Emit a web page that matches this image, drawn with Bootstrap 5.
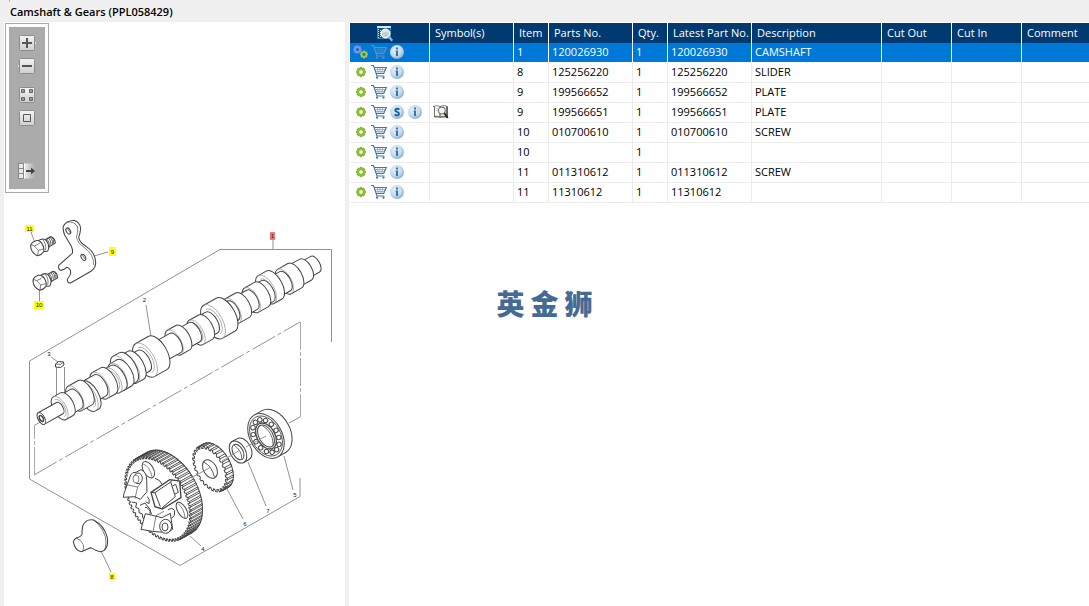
<!DOCTYPE html>
<html lang="en">
<head>
<meta charset="utf-8">
<meta name="viewport" content="width=device-width, initial-scale=1">
<title>Camshaft &amp; Gears (PPL058429)</title>
<link href="https://cdn.jsdelivr.net/npm/bootstrap@5.3.0/dist/css/bootstrap.min.css" rel="stylesheet">
<style>
body{background:#f0f0f0;color:#000;font-family:"Open Sans","Noto Sans",sans-serif;font-size:11px;line-height:16px}
.title-bar{height:22px;padding:4px 10px 0}
.title-bar h1{font-size:11px;line-height:16px;font-weight:600;margin:0}
.title-bar::before{content:"";position:absolute;left:9px;top:0;width:1px;height:2px;background:#b4b4b4}
.workspace{display:grid;grid-template-columns:341px minmax(0,1fr);gap:4px;padding-left:4px;flex:1}
.tool-frame{border:1px solid #aaa;background:#fff;padding:3px;width:44px;margin:1px 0 0 1px}
.tool-strip{background:#ababab;padding:8px 0 10px}
.tool-btn,.icon-btn{border:0;background:none;padding:0;display:block;width:16px;height:16px;line-height:0}
.tool-btn{overflow:visible}
.tool-btn svg,.icon-btn svg,.cell-icon{width:16px;height:16px;display:block;overflow:visible}
.tools-zoom,.tools-fit{gap:7px}
.tools-fit{margin-top:13px}
.tools-panel{margin-top:37px}
.drawing{display:block;width:100%}
.drawing text{font:6px "Liberation Sans",Arial,sans-serif;fill:#111;text-anchor:middle}
.parts-pane{padding:1px 0 0 1px;overflow:auto}
.parts-table{table-layout:fixed;width:100%;min-width:700px;margin:0;color:#000;border-collapse:separate;border-spacing:0}
.parts-table th,.parts-table td{height:20px;padding:0 3px 2px;border:0;white-space:nowrap;font-weight:400;line-height:17px;vertical-align:middle;box-shadow:none}
.parts-table th{background:#003a70;color:#fff;border-right:1px solid #fff;padding:0 0 2px 5px}
.parts-table th.icon-head{padding:2px 0 0 27px}
.parts-table td{background:#fff;color:#000;border-right:1px solid #ececec;border-bottom:1px solid #ececec}
.parts-table tr>:last-child{border-right:0}
.parts-table .selected td{background:#0078d7;color:#fff;border-color:#fff}
.icon-row{gap:2px}
.brand-mark{position:absolute;left:50%;top:50%;transform:translate(-50%,-50%);gap:6px;font:900 28px/28px "Noto Sans CJK SC",sans-serif;color:#446b96;pointer-events:none}
</style>
</head>
<body>
<svg width="0" height="0" class="position-absolute" aria-hidden="true">
<defs>
<linearGradient id="gBtn" x1="0" y1="0" x2="0" y2="1"><stop offset="0" stop-color="#f4f4f4"/><stop offset="1" stop-color="#cfcfcf"/></linearGradient>
<radialGradient id="gDisc" cx=".4" cy=".35" r=".7"><stop offset="0" stop-color="#e6f0f9"/><stop offset=".6" stop-color="#c5daec"/><stop offset="1" stop-color="#7fa8cd"/></radialGradient>
<linearGradient id="gFade"><stop offset="0" stop-color="#eee"/><stop offset="1" stop-color="#ababab"/></linearGradient>
<symbol id="cog" viewBox="0 0 16 16"><g stroke="#80b42a" stroke-width="2.6"><path d="M8 3v10M3 8h10M4.500 4.500l7 7M11.500 4.500l-7 7"/></g><circle cx="8" cy="8" r="4" fill="#8cbf35"/><circle cx="8" cy="8" r="1.8" fill="#fff"/></symbol>
<symbol id="cogs" viewBox="0 0 16 16"><g stroke="#5d86e0" stroke-width="2"><path d="M4.500 1v9M0 5.500h9M1.300 2.300l6.400 6.400M7.700 2.300l-6.400 6.400"/></g><circle cx="4.500" cy="5.500" r="3.400" fill="#7897e5"/><circle cx="4.500" cy="5.500" r="1.500" fill="#1b5fc0"/><g stroke="#93bf3f" stroke-width="2"><path d="M11 6.500v8M7 10.500h8M8.200 7.700l5.600 5.600M13.800 7.700l-5.600 5.600"/></g><circle cx="11" cy="10.500" r="3" fill="#a3c951"/><circle cx="11" cy="10.500" r="1.400" fill="#1c70b8"/></symbol>
<symbol id="cart" viewBox="0 0 16 16"><path d="M0 1.500h2.500l3.500 10.500h7.500M3.500 3.500h11.800l-2.600 6H5.500" fill="none" stroke="currentColor" stroke-width="1.200"/><path d="M4 5.500h10.500M4.500 7.500h9M6.500 3.500l.8 6M9 3.500v6M11.800 3.500l-1 6" stroke="currentColor" stroke-width=".8" opacity=".65"/><circle cx="6" cy="13.700" r="1.100" fill="currentColor"/><circle cx="12.500" cy="13.700" r="1.100" fill="currentColor"/></symbol>
<symbol id="info" viewBox="0 0 16 16"><circle cx="8" cy="8" r="7" fill="url(#gDisc)"/><path d="M7 3.500h2v2H7zM6.500 6.500H9V12H7V7.500h-.5z" fill="#3573ab"/></symbol>
<symbol id="super" viewBox="0 0 16 16"><circle cx="8" cy="8" r="7" fill="url(#gDisc)"/><path d="M10.300 5.500C9.200 4.400 6.200 4.200 6.200 6.200 6.200 8.200 10 7.600 10 9.800c0 2.200-3 1.900-4.400.8" fill="none" stroke="#0b66a5" stroke-width="1.900"/></symbol>
<symbol id="book" viewBox="0 0 16 16"><path d="M0 2.500h1.500v10.500h5l1 1 1-1h6V2.500h-1" fill="#8b8570" stroke="#6b6757"/><path d="M1.500 2c2-.8 4-.3 5.500.8v10.400c-1.500-1-3.500-1.300-5.500-.8zM7 2.800C8.500 1.700 11 1.300 13.500 2v10.400c-2-.4-5-.2-6.500.8z" fill="#fbfbf7" stroke="#55524a" stroke-width=".7"/><path d="M3 4.500h2M3 6.500h2" stroke="#ccc"/><circle cx="8.800" cy="6.500" r="3.400" fill="#f3f6f8" stroke="#777" stroke-width="1.100"/><path d="M11.300 9l3.400 5" stroke="#222" stroke-width="1.800"/></symbol>
<symbol id="finder" viewBox="0 0 16 16"><path d="M.5.500h13v12H.5z" fill="#0a4f84" stroke="#2b86bd"/><path d="M0 1h14" stroke="#cfe8f5" stroke-width="2"/><path d="M1.500 3v10M3.500 4v8" stroke="#d9edf7" stroke-dasharray="1 1"/><circle cx="8.500" cy="7.500" r="4.300" fill="#c4cdd2" stroke="#f4f7f8" stroke-width="1.400"/><path d="M6 6.500c1-2 4-2 5 0" fill="none" stroke="#fff"/><path d="M12 11l3.300 3.700" stroke="#7ec1e4" stroke-width="2.200"/></symbol>
</defs>
</svg>

<div class="d-flex flex-column min-vh-100 position-relative">
<header class="title-bar"><h1>Camshaft &amp; Gears (PPL058429)</h1></header>
<main class="workspace">
<section class="bg-white" aria-label="Drawing">
  <div class="tool-frame"><div class="tool-strip d-flex flex-column align-items-center" role="toolbar" aria-label="View tools">
    <div class="tools-zoom d-flex flex-column">
      <button class="tool-btn" type="button" aria-label="Zoom in"><svg viewBox="0 0 16 16"><path d="M15 5l3 3-3 3z" fill="#e4e4e4" stroke="#999" stroke-width=".6"/><rect x=".5" y=".5" width="15" height="15" rx="1" fill="url(#gBtn)" stroke="#8c8c8c"/><path d="M3 8h10M8 3v10" stroke="#555" stroke-width="2"/></svg></button>
      <button class="tool-btn" type="button" aria-label="Zoom out"><svg viewBox="0 0 16 16"><path d="M1 5L-2 8l3 3z" fill="#e4e4e4" stroke="#999" stroke-width=".6"/><rect x=".5" y=".5" width="15" height="15" rx="1" fill="url(#gBtn)" stroke="#8c8c8c"/><path d="M3 8h10" stroke="#555" stroke-width="2"/></svg></button>
    </div>
    <div class="tools-fit d-flex flex-column">
      <button class="tool-btn" type="button" aria-label="Fit to window"><svg viewBox="0 0 16 16"><rect x=".5" y=".5" width="15" height="15" rx="1" fill="url(#gBtn)" stroke="#8c8c8c"/><path d="M2.500 2.500h3v3h-3zM10.500 2.500h3v3h-3zM2.500 10.500h3v3h-3zM10.500 10.500h3v3h-3z" fill="#999" stroke="#666"/></svg></button>
      <button class="tool-btn" type="button" aria-label="Actual size"><svg viewBox="0 0 16 16"><rect x=".5" y=".5" width="15" height="15" rx="1" fill="url(#gBtn)" stroke="#8c8c8c"/><path d="M4.500 4.500h7v7h-7z" fill="none" stroke="#555"/></svg></button>
    </div>
    <div class="tools-panel">
      <button class="tool-btn" type="button" aria-label="Move panel"><svg viewBox="0 0 16 16"><path d="M5 .5h11v15H5z" fill="url(#gFade)"/><path d="M-.5.500h5v15h-5z" fill="#e8e8e8" stroke="#888"/><path d="M-.5 5.500h5M-.5 10.500h5" stroke="#888"/><path d="M5.500.5v15" stroke="#fff"/><path d="M7 8h6" stroke="#444" stroke-width="2"/><path d="M12 4.500L16 8l-4 3.500z" fill="#444"/></svg></button>
    </div>
  </div></div>

  <svg class="drawing" viewBox="4 193 341 413" fill="none" stroke="#444" role="img" aria-label="Exploded view of camshaft and gears">
    <g stroke="#929292">
      <path d="M29.500 361L220 249.500h111.500V342M29.500 361v118L180 565.500l120-69V478M34 425.500l9-5"/>
      <path d="M34 475L300 322" stroke-dasharray="26 3 4 3"/>
      <path d="M34.500 475v-49M300.500 322v95" stroke="#aaa" stroke-dasharray="28 2 4 2"/>
      <path d="M300 417l-11 6M273 240v9"/>
      <path d="M146 305l5 32M51 357l7 5M56.500 367v38M64.500 367v38M108 252l-14 4M31 232l4 11M39.500 289v12M101 551l10 21"/>
    </g>
    <g id="shaft" transform="translate(44 417) rotate(-29.4)"></g>
    <g id="gears"></g>
    <g stroke="#929292"><path d="M190 536l11 10M284 456l9 34M248 462l18 44M227 489l16 30M191 478l20-11M222 461l18-11M246 447l20-11"/></g>

    <!-- plate, bolts -->
    <g transform="translate(0 205) scale(.33333)" stroke-width="3.200" fill="#fff">
      <path d="M190 64Q198 48 222 46Q240 52 242 70Q241 84 236 98Q240 114 258 124Q288 144 287 175Q286 190 274 198L212 234Q202 236 202 223L211 209Q215 190 200 187Q190 197 181 196Q173 189 177 180L217 145Q219 135 214 124L194 90Q188 76 190 64z"/>
      <path d="M200 51Q225 49 233 66Q235 82 229 98Q235 117 252 127Q282 148 281 180" fill="none" stroke-width="2"/>
      <ellipse cx="205" cy="78" rx="6" ry="10" transform="rotate(-30 205 78)"/><ellipse cx="250" cy="157" rx="6" ry="10" transform="rotate(-30 250 157)"/>
      <path d="M202 70l8 13M247 150l8 12" stroke-width="2"/>
      <g id="bolt"><path d="M134 105l18-10q13 3 14 19l-26 16z"/><path d="M140 101q9 9 8 24M145 98q9 9 8 22M150 96q9 9 8 21M155 95q8 8 6 20" fill="none" stroke-width="2.500"/><path d="M115 107q14-10 24 0 12 17 4 31-12 4-22-2z"/><path d="M127 102q14 16 9 34" fill="none" stroke-width="2"/><path d="M93 118Q97 110 108 107Q118 105 124 113Q134 126 131 140Q125 150 112 152Q104 149 97 140Q90 128 93 118z"/><path d="M93 119l10 4 13-6 6-6M103 123l12 13-2 15M115 136l15-4" fill="none" stroke-width="2"/></g>
      <use href="#bolt" x="7" y="104"/>
    </g>
    <!-- slider -->
    <g transform="translate(60 500) scale(.33333)" stroke-width="3.200" fill="#fff">
      <path d="M68 78Q78 55 101 60Q132 76 142 112Q147 151 121 155Q108 153 92 143L64 155Q45 153 40 125Q42 118 49 114Q70 109 66 94z"/>
      <path d="M49 114Q62 118 70 134Q73 148 67 154M101 60Q125 78 136 110Q141 139 132 152" fill="none" stroke-width="2"/>
    </g>
    <!-- key pin -->
    <path d="M55.500 364l3-2.500 5 .5.500 3-3.500 2.500-5-.5z" fill="#fff"/><path d="M55.500 364l5 .5 3-2.500" stroke-width=".7"/>

    <g stroke="none"><path d="M270 232h5v8h-5z" fill="#f27878"/><path d="M109 247h7v9h-7zM25 225h9v7h-9zM34 301h10v8H34zM109 573h6v7h-6z" fill="#ff0"/>
      <text x="272.500" y="238">1</text><text x="112.500" y="254">9</text><text x="29.500" y="231">11</text><text x="39" y="307">10</text><text x="112" y="579">8</text>
      <text x="144.500" y="302">2</text><text x="49" y="356">3</text><text x="203" y="551">4</text><text x="295" y="497">5</text><text x="245" y="526">6</text><text x="268" y="513">7</text></g>
  </svg>
</section>

<section class="parts-pane bg-white" aria-label="Parts list">
  <table class="table parts-table">
    <colgroup><col style="width:80px"><col style="width:84px"><col style="width:35px"><col style="width:84px"><col style="width:35px"><col style="width:84px"><col style="width:130px"><col style="width:70px"><col style="width:70px"><col></colgroup>
    <thead><tr><th class="icon-head"><svg class="cell-icon" role="img" aria-label="Actions"><use href="#finder"/></svg></th><th>Symbol(s)</th><th>Item</th><th>Parts No.</th><th>Qty.</th><th>Latest Part No.</th><th>Description</th><th>Cut Out</th><th>Cut In</th><th>Comment</th></tr></thead>
    <tbody id="parts"></tbody>
  </table>
</section>
</main>
<div class="brand-mark d-flex" lang="zh"><span>英</span><span>金</span><span>狮</span></div>
</div>

<script src="https://cdn.jsdelivr.net/npm/bootstrap@5.3.0/dist/js/bootstrap.bundle.min.js"></script>
<script>
// Parts list rows: item, part number, description, flags
const parts = [
  [1,'120026930','CAMSHAFT',{selected:true}],
  [8,'125256220','SLIDER',{}],
  [9,'199566652','PLATE',{}],
  [9,'199566651','PLATE',{superseded:true}],
  [10,'010700610','SCREW',{}],
  [10,'','',{}],
  [11,'011310612','SCREW',{}],
  [11,'11310612','',{}]
];
const icon = (id,label,color) => `<button type="button" class="icon-btn" aria-label="${label}"><svg style="color:${color||'#4477a8'}"><use href="#${id}"/></svg></button>`;
document.getElementById('parts').innerHTML = parts.map(([item,no,desc,f]) => `<tr class="${f.selected?'selected':''}">
  <td><div class="icon-row d-flex">${icon(f.selected?'cogs':'cog','Assembly')}${icon('cart','Add to cart',f.selected?'#7d8998':'')}${f.superseded?icon('super','Superseded'):''}${icon('info','Information')}</div></td>
  <td>${f.superseded?icon('book','Look up symbol'):''}</td><td>${item}</td><td>${no}</td><td>1</td><td>${no}</td><td>${desc}</td><td></td><td></td><td></td></tr>`).join('');

// Camshaft sections along its axis: start, end, radius, sideways shift of the centre
const sections = [
  [300,314,9,0],[290,304,12,0],[276,292,14,0],[268,280,11,0],[256,270,16,-2],[250,260,12,0],[238,254,14,0],[228,242,11,0],
  [216,232,14,0],[208,220,11,0],[194,214,19,0],[188,196,12,0],[174,189,14,1],[162,176,11,0],[150,164,14,-1],[134,154,11,0],
  [116,136,19,0],[106,118,12,0],[98,110,16,0],[90,102,17,-2],[84,96,15,1],[78,88,14,2],
  [64,78,15,0],[54,68,12,0],[48,56,16,4],[36,52,14,-1],[28,40,11,0],[18,30,13,0],[-3,20,6.5,0]
].sort((a,b) => b[0]-a[0]);
const K = .5;
document.getElementById('shaft').innerHTML = sections.map(([a,b,r,s]) => {
  const k = r*K, big = r>12;
  return `<path fill="#fff" d="M${a} ${s-r}L${b-k*.6} ${s-r}A${k} ${r} 0 0 1 ${b-k*.6} ${s+r}L${a} ${s+r}A${k} ${r} 0 0 1 ${a} ${s-r}z"/>` +
    (big ? `<path stroke="#999" stroke-width=".7" d="M${a} ${s-r}a${k} ${r} 0 0 1 0 ${2*r}M${a} ${s-r*.75}a${k*.75} ${r*.75} 0 0 1 0 ${1.5*r}"/>` : '');
}).join('') + '<ellipse cx="-3" rx="3.200" ry="6.500" fill="#fff"/><ellipse cx="-3" rx="1.700" ry="3.200" stroke-width="1.500"/>';

// Gears: toothed rim of n teeth, face radius ry, foreshortened rx, width w
function gear(cx,cy,rx,ry,w,n,depth){
  let pts=[], ticks='';
  const at=(t,f,o=0)=>[(rx*f*Math.cos(t)+o).toFixed(1),(ry*f*Math.sin(t)).toFixed(1)];
  for(let i=0;i<n;i++){
    const t=i*2*Math.PI/n, d=Math.PI/n;
    pts.push(at(t,1),at(t+d*.7,1),at(t+d,1-depth),at(t+d*1.7,1-depth));
    if(Math.cos(t)>-.15) ticks+=`M${at(t,1)}L${at(t,1,w)}L${at(t+d*.8,1,w)}L${at(t+d*.7,1)}`;
  }
  const hull=`M0 ${-ry}L${w} ${-ry}A${rx} ${ry} 0 0 1 ${w} ${ry}L0 ${ry}z`;
  return `<g transform="translate(${cx} ${cy}) rotate(-29.4)"><path d="${hull}" fill="#fff"/><path d="M${pts.join('L')}z" fill="#fff"/><path d="${ticks}" stroke-width=".8"/></g>`;
}
const ring=(cx,cy,rx,ry,w,inner)=>`<g transform="translate(${cx} ${cy}) rotate(-29.4)"><path fill="#fff" d="M0 ${-ry}L${w} ${-ry}A${rx} ${ry} 0 0 1 ${w} ${ry}L0 ${ry}z"/><ellipse rx="${rx}" ry="${ry}" fill="#fff"/>${inner}</g>`;
let balls='';
for(let i=0;i<14;i++){const t=i*Math.PI/7;balls+=`<circle cx="${(11.5*Math.cos(t)).toFixed(1)}" cy="${(17.5*Math.sin(t)).toFixed(1)}" r="2.200" fill="#fff"/>`}
document.getElementById('gears').innerHTML =
  gear(158,499,28,46,13,64,.05) +
  `<g transform="translate(110 430) scale(.33333)" stroke-width="3" fill="#fff">
    <ellipse cx="115" cy="119" rx="15" ry="27" transform="rotate(-30 115 119)"/><path d="M100 103q18 3 26 37" fill="none" stroke-width="2"/>
    <ellipse cx="216" cy="241" rx="13" ry="27" transform="rotate(-30 216 241)"/><path d="M205 222q17 12 20 42" fill="none" stroke-width="2"/>
    <path d="M42 191l20-56q5-10 16-8l15-8q18 8 17 32l1 34-20 23-17-8-34 2z"/><path d="M43 163l40 8 10-13M83 171l-8 35" fill="none" stroke-width="2"/>
    <ellipse cx="84" cy="145" rx="13" ry="16"/><ellipse cx="78" cy="147" rx="9" ry="12" stroke-width="2"/>
    <path d="M65 216l15 3-3 13 10 4 0 12 10 4 2 13 20-3 2-23-16-20-15 7M112 200q9 8 5 21l-10-6M135 145q16 4 21 18" />
    <path d="M123 187l56-38 30 4 4 50-56 34-22-7z" stroke-width="4"/><path d="M123 187l12 1 47-32 14 44-40 34M182 156l6-7M187 168l10-5 8 24-10 5M135 188l16 42" fill="none" stroke-width="3"/>
    <path d="M93 298l13-47 50 12 25-13 7 48-15 10-46-4z"/><path d="M130 302l8-45 24-13" fill="none" stroke-width="2"/><ellipse cx="167" cy="289" rx="18" ry="21"/><ellipse cx="165" cy="291" rx="9" ry="12"/>
    <path d="M174 240q12-10 20 2 2 17-8 22M105 232q12 0 20 20" fill="none"/>
  </g>` +
  gear(210,469,14,25,7,26,.1) +
  '<g transform="translate(210 469) rotate(-29.4)"><ellipse rx="6.500" ry="10" fill="#fff"/><path d="M-2-9q5 7 2 18" stroke-width=".8"/></g>' +
  ring(238,452,7.5,12,6,'<ellipse rx="5" ry="8.500"/><path d="M0-8q4 8 0 16" stroke-width=".7"/>') +
  ring(266,436,16,24,9,`<ellipse rx="14.500" ry="21.500" stroke-width=".8"/>${balls}<ellipse rx="9" ry="14" fill="#fff" stroke-width="1.300"/><ellipse rx="7" ry="12"/><path d="M2-11q6 11 0 22" stroke-width=".7"/>`);
</script>
</body>
</html>
